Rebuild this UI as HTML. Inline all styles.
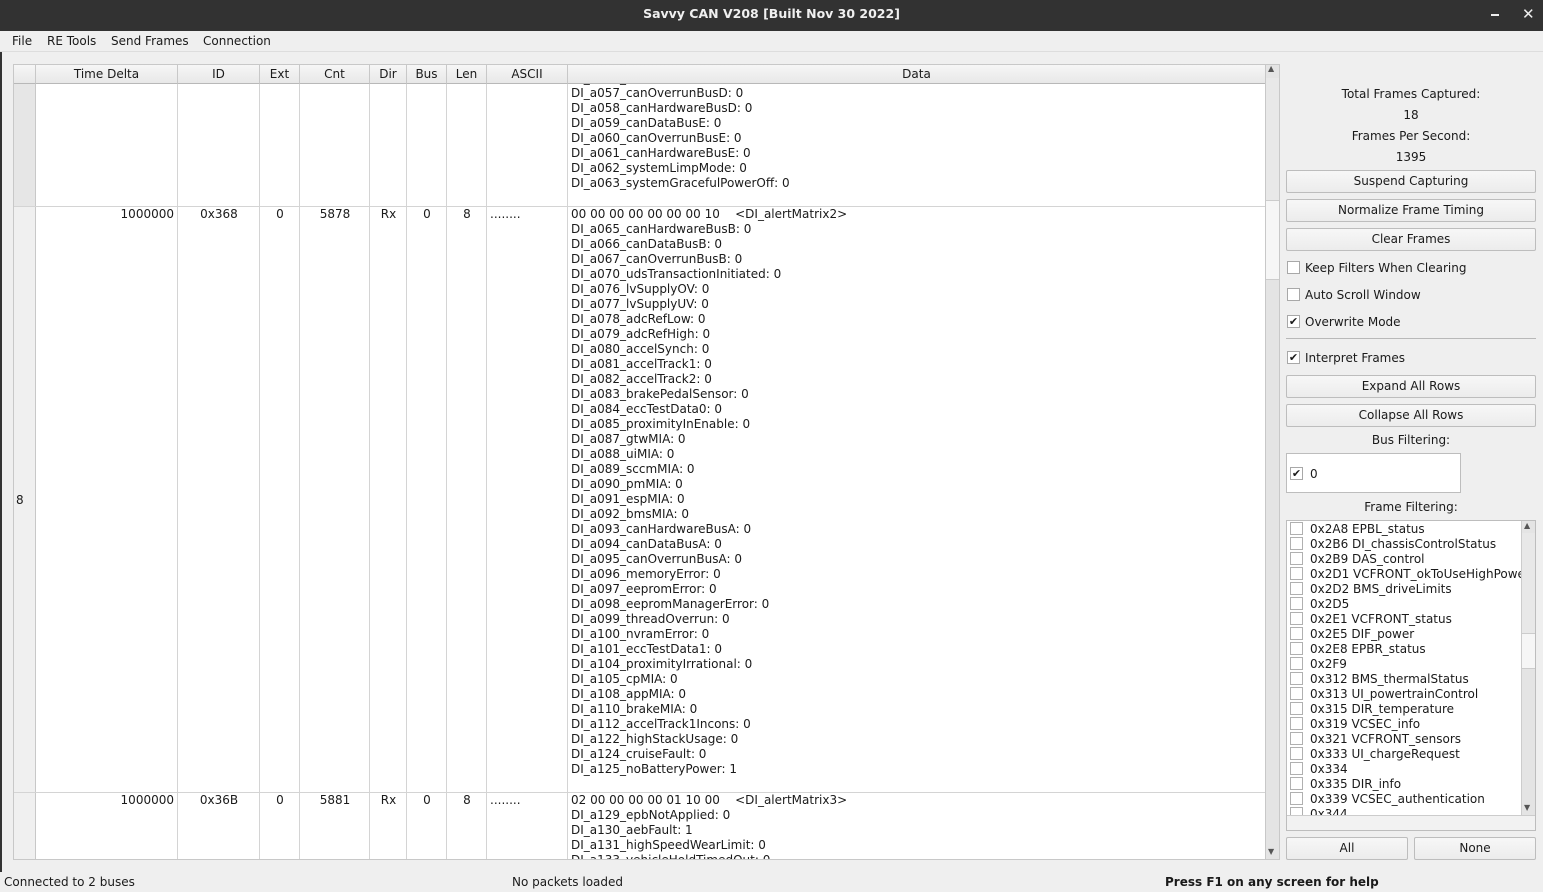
<!DOCTYPE html>
<html><head><meta charset="utf-8"><style>
*{margin:0;padding:0;box-sizing:border-box}
body{width:1543px;height:892px;overflow:hidden;background:#efefef;font-family:"DejaVu Sans","Liberation Sans",sans-serif;font-size:12px;color:#1a1a1a;position:relative}
.a{position:absolute;white-space:nowrap}
#title{left:0;top:0;width:1543px;height:31px;background:#323232;color:#f0f0f0;font-weight:bold;text-align:center;line-height:27px;font-size:12.5px}
#menu{left:0;top:31px;width:1543px;height:21px;background:#efefef;border-bottom:1px solid #ddd}
#menu span{position:absolute;top:3px}
.tbl{left:13px;top:64px;width:1253px;height:796px;background:#fff;border:1px solid #c8c8c8;overflow:hidden}
.hd{position:absolute;top:0;height:19px;background:linear-gradient(#f6f6f6,#e8e8e8);border-right:1px solid #c8c8c8;border-bottom:1px solid #b8b8b8;text-align:center;line-height:18px}
.vl{position:absolute;top:19px;bottom:0;width:1px;background:#d4d4d4}
.hl{position:absolute;left:0;right:0;height:1px;background:#d4d4d4}
.c{position:absolute;line-height:15px}
.data{position:absolute;left:557px;line-height:15px;white-space:pre}
.btn{position:absolute;left:1286px;width:250px;height:23px;border:1px solid #bdbdbd;border-radius:2px;background:linear-gradient(#f7f7f7,#ececec);text-align:center;line-height:21px}
.cb{position:absolute;width:13px;height:13px;border:1px solid #a8a8a8;background:#fff;font-size:11px;line-height:11px;text-align:center;font-weight:bold}
.lbl{position:absolute;left:1286px;width:250px;text-align:center}
</style></head><body>
<div class="a" id="title">Savvy CAN V208 [Built Nov 30 2022]</div>
<div class="a" style="left:1491px;top:14px;width:8px;height:2px;background:#eee"></div>
<div class="a" style="left:1522px;top:5px;color:#eee;font-size:15px;font-weight:bold">✕</div>
<div class="a" id="menu"><span style="left:12px">File</span><span style="left:47px">RE Tools</span><span style="left:111px">Send Frames</span><span style="left:203px">Connection</span></div>
<div class="a" style="left:0;top:52px;width:2px;height:820px;background:#333"></div>

<div class="a tbl">
<div class="hd" style="left:0;width:22px"></div>
<div class="hd" style="left:22px;width:142px">Time Delta</div>
<div class="hd" style="left:164px;width:82px">ID</div>
<div class="hd" style="left:246px;width:40px">Ext</div>
<div class="hd" style="left:286px;width:70px">Cnt</div>
<div class="hd" style="left:356px;width:37px">Dir</div>
<div class="hd" style="left:393px;width:40px">Bus</div>
<div class="hd" style="left:433px;width:40px">Len</div>
<div class="hd" style="left:473px;width:81px">ASCII</div>
<div class="hd" style="left:554px;width:698px">Data</div>
<div style="position:absolute;left:0;top:19px;width:22px;bottom:0;background:#f0f0f0"></div>
<div style="position:absolute;left:0;top:19px;width:22px;height:122px;background:#e6e6e6"></div>
<div style="position:absolute;left:0;top:19px;width:22px;bottom:0;border-right:1px solid #c8c8c8"></div>
<div class="vl" style="left:163px"></div><div class="vl" style="left:245px"></div><div class="vl" style="left:285px"></div><div class="vl" style="left:355px"></div><div class="vl" style="left:392px"></div><div class="vl" style="left:432px"></div><div class="vl" style="left:472px"></div><div class="vl" style="left:553px"></div>
<div class="hl" style="top:141px"></div><div class="hl" style="top:727px"></div>
<div class="c" style="left:2px;top:428px">8</div>
<div class="c" style="left:22px;width:138px;text-align:right;top:142px">1000000</div>
<div class="c" style="left:164px;width:82px;text-align:center;top:142px">0x368</div>
<div class="c" style="left:246px;width:40px;text-align:center;top:142px">0</div>
<div class="c" style="left:286px;width:70px;text-align:center;top:142px">5878</div>
<div class="c" style="left:356px;width:37px;text-align:center;top:142px">Rx</div>
<div class="c" style="left:393px;width:40px;text-align:center;top:142px">0</div>
<div class="c" style="left:433px;width:40px;text-align:center;top:142px">8</div>
<div class="c" style="left:476px;top:142px">........</div>
<div class="c" style="left:22px;width:138px;text-align:right;top:728px">1000000</div>
<div class="c" style="left:164px;width:82px;text-align:center;top:728px">0x36B</div>
<div class="c" style="left:246px;width:40px;text-align:center;top:728px">0</div>
<div class="c" style="left:286px;width:70px;text-align:center;top:728px">5881</div>
<div class="c" style="left:356px;width:37px;text-align:center;top:728px">Rx</div>
<div class="c" style="left:393px;width:40px;text-align:center;top:728px">0</div>
<div class="c" style="left:433px;width:40px;text-align:center;top:728px">8</div>
<div class="c" style="left:476px;top:728px">........</div>
<div class="data" style="top:6px;clip-path:inset(13px 0 0 0)">DI_a056_canHardwareBusD: 0
DI_a057_canOverrunBusD: 0
DI_a058_canHardwareBusD: 0
DI_a059_canDataBusE: 0
DI_a060_canOverrunBusE: 0
DI_a061_canHardwareBusE: 0
DI_a062_systemLimpMode: 0
DI_a063_systemGracefulPowerOff: 0</div>
<div class="data" style="top:142px">00 00 00 00 00 00 00 10    &lt;DI_alertMatrix2&gt;
DI_a065_canHardwareBusB: 0
DI_a066_canDataBusB: 0
DI_a067_canOverrunBusB: 0
DI_a070_udsTransactionInitiated: 0
DI_a076_lvSupplyOV: 0
DI_a077_lvSupplyUV: 0
DI_a078_adcRefLow: 0
DI_a079_adcRefHigh: 0
DI_a080_accelSynch: 0
DI_a081_accelTrack1: 0
DI_a082_accelTrack2: 0
DI_a083_brakePedalSensor: 0
DI_a084_eccTestData0: 0
DI_a085_proximityInEnable: 0
DI_a087_gtwMIA: 0
DI_a088_uiMIA: 0
DI_a089_sccmMIA: 0
DI_a090_pmMIA: 0
DI_a091_espMIA: 0
DI_a092_bmsMIA: 0
DI_a093_canHardwareBusA: 0
DI_a094_canDataBusA: 0
DI_a095_canOverrunBusA: 0
DI_a096_memoryError: 0
DI_a097_eepromError: 0
DI_a098_eepromManagerError: 0
DI_a099_threadOverrun: 0
DI_a100_nvramError: 0
DI_a101_eccTestData1: 0
DI_a104_proximityIrrational: 0
DI_a105_cpMIA: 0
DI_a108_appMIA: 0
DI_a110_brakeMIA: 0
DI_a112_accelTrack1Incons: 0
DI_a122_highStackUsage: 0
DI_a124_cruiseFault: 0
DI_a125_noBatteryPower: 1</div>
<div class="data" style="top:728px">02 00 00 00 00 01 10 00    &lt;DI_alertMatrix3&gt;
DI_a129_epbNotApplied: 0
DI_a130_aebFault: 1
DI_a131_highSpeedWearLimit: 0
DI_a133_vehicleHoldTimedOut: 0</div>
</div>
<div class="a" style="left:1265px;top:64px;width:15px;height:796px;background:#e4e4e4;border:1px solid #c8c8c8"></div>
<div class="a" style="left:1266px;top:78px;width:13px;height:122px;background:#e8e8e8"></div>
<div class="a" style="left:1266px;top:200px;width:13px;height:80px;background:#f6f6f6;border-top:1px solid #ccc;border-bottom:1px solid #ccc"></div>
<div class="a" style="left:1268px;top:64px;font-size:8px;color:#555">▲</div>
<div class="a" style="left:1268px;top:847px;font-size:8px;color:#555">▼</div>

<div class="lbl a" style="top:87px">Total Frames Captured:</div>
<div class="lbl a" style="top:108px">18</div>
<div class="lbl a" style="top:129px">Frames Per Second:</div>
<div class="lbl a" style="top:150px">1395</div>
<div class="btn" style="top:170px">Suspend Capturing</div>
<div class="btn" style="top:199px">Normalize Frame Timing</div>
<div class="btn" style="top:228px">Clear Frames</div>
<div class="cb" style="left:1287px;top:261px"></div><div class="a" style="left:1305px;top:261px">Keep Filters When Clearing</div>
<div class="cb" style="left:1287px;top:288px"></div><div class="a" style="left:1305px;top:288px">Auto Scroll Window</div>
<div class="cb" style="left:1287px;top:315px">✔</div><div class="a" style="left:1305px;top:315px">Overwrite Mode</div>
<div class="a" style="left:1286px;top:338px;width:250px;height:1px;background:#b8b8b8"></div>
<div class="cb" style="left:1287px;top:351px">✔</div><div class="a" style="left:1305px;top:351px">Interpret Frames</div>
<div class="btn" style="top:375px">Expand All Rows</div>
<div class="btn" style="top:404px">Collapse All Rows</div>
<div class="lbl a" style="top:433px">Bus Filtering:</div>
<div class="a" style="left:1286px;top:453px;width:175px;height:40px;background:#fff;border:1px solid #bdbdbd"></div>
<div class="cb" style="left:1290px;top:467px">✔</div><div class="a" style="left:1310px;top:467px">0</div>
<div class="lbl a" style="top:500px">Frame Filtering:</div>
<div class="a" style="left:1286px;top:520px;width:250px;height:311px;background:#fff;border:1px solid #bdbdbd;overflow:hidden">
<div style="position:absolute;left:0;top:1px;width:234px;height:293px;overflow:hidden;line-height:15px">
<div style="position:absolute;left:23px;top:0">0x2A8 EPBL_status<br>0x2B6 DI_chassisControlStatus<br>0x2B9 DAS_control<br>0x2D1 VCFRONT_okToUseHighPower<br>0x2D2 BMS_driveLimits<br>0x2D5<br>0x2E1 VCFRONT_status<br>0x2E5 DIF_power<br>0x2E8 EPBR_status<br>0x2F9<br>0x312 BMS_thermalStatus<br>0x313 UI_powertrainControl<br>0x315 DIR_temperature<br>0x319 VCSEC_info<br>0x321 VCFRONT_sensors<br>0x333 UI_chargeRequest<br>0x334<br>0x335 DIR_info<br>0x339 VCSEC_authentication<br>0x344</div>
</div>
<div style="position:absolute;left:234px;top:0;width:14px;height:294px;background:#e4e4e4;border-left:1px solid #ccc"></div>
<div style="position:absolute;left:235px;top:12px;width:13px;height:100px;background:#e8e8e8"></div>
<div style="position:absolute;left:235px;top:112px;width:13px;height:36px;background:#f6f6f6;border-top:1px solid #ccc;border-bottom:1px solid #ccc"></div>
<div style="position:absolute;left:237px;top:0;font-size:8px;color:#555">▲</div>
<div style="position:absolute;left:237px;top:282px;font-size:8px;color:#555">▼</div>
<div style="position:absolute;left:0;top:294px;width:248px;height:15px;background:#f2f2f2;border-top:1px solid #ccc"></div>
</div>
<div class="btn" style="top:837px;width:122px">All</div>
<div class="btn" style="top:837px;left:1414px;width:122px">None</div>

<div class="a" style="left:4px;top:875px">Connected to 2 buses</div>
<div class="a" style="left:512px;top:875px">No packets loaded</div>
<div class="a" style="left:1165px;top:875px;font-weight:bold">Press F1 on any screen for help</div>
<div>
<i style="position:absolute;left:1290px;top:522px;width:13px;height:13px;border:1px solid #b0b0b0"></i>
<i style="position:absolute;left:1290px;top:537px;width:13px;height:13px;border:1px solid #b0b0b0"></i>
<i style="position:absolute;left:1290px;top:552px;width:13px;height:13px;border:1px solid #b0b0b0"></i>
<i style="position:absolute;left:1290px;top:567px;width:13px;height:13px;border:1px solid #b0b0b0"></i>
<i style="position:absolute;left:1290px;top:582px;width:13px;height:13px;border:1px solid #b0b0b0"></i>
<i style="position:absolute;left:1290px;top:597px;width:13px;height:13px;border:1px solid #b0b0b0"></i>
<i style="position:absolute;left:1290px;top:612px;width:13px;height:13px;border:1px solid #b0b0b0"></i>
<i style="position:absolute;left:1290px;top:627px;width:13px;height:13px;border:1px solid #b0b0b0"></i>
<i style="position:absolute;left:1290px;top:642px;width:13px;height:13px;border:1px solid #b0b0b0"></i>
<i style="position:absolute;left:1290px;top:657px;width:13px;height:13px;border:1px solid #b0b0b0"></i>
<i style="position:absolute;left:1290px;top:672px;width:13px;height:13px;border:1px solid #b0b0b0"></i>
<i style="position:absolute;left:1290px;top:687px;width:13px;height:13px;border:1px solid #b0b0b0"></i>
<i style="position:absolute;left:1290px;top:702px;width:13px;height:13px;border:1px solid #b0b0b0"></i>
<i style="position:absolute;left:1290px;top:717px;width:13px;height:13px;border:1px solid #b0b0b0"></i>
<i style="position:absolute;left:1290px;top:732px;width:13px;height:13px;border:1px solid #b0b0b0"></i>
<i style="position:absolute;left:1290px;top:747px;width:13px;height:13px;border:1px solid #b0b0b0"></i>
<i style="position:absolute;left:1290px;top:762px;width:13px;height:13px;border:1px solid #b0b0b0"></i>
<i style="position:absolute;left:1290px;top:777px;width:13px;height:13px;border:1px solid #b0b0b0"></i>
<i style="position:absolute;left:1290px;top:792px;width:13px;height:13px;border:1px solid #b0b0b0"></i>
<i style="position:absolute;left:1290px;top:807px;width:13px;height:8px;border:1px solid #b0b0b0;border-bottom:none"></i>
</div>
</body></html>
